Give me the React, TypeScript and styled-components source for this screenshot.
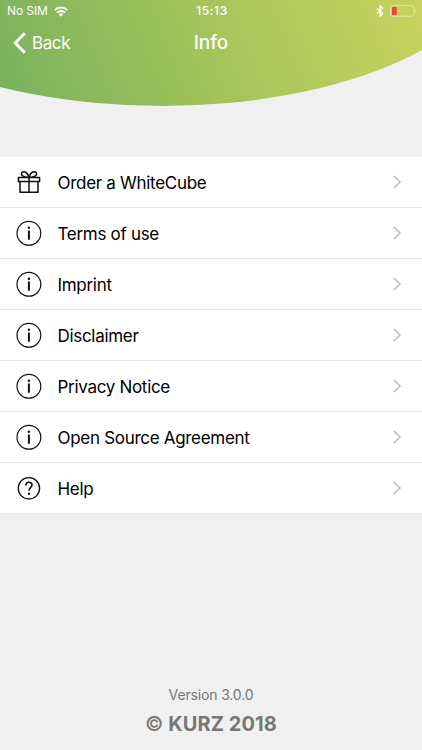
import React from "react";
import styled, { createGlobalStyle } from "styled-components";

const GlobalStyle = createGlobalStyle`
  * { box-sizing: border-box; }
  body { margin: 0; background: #f0f0f0; font-family: Inter, "Liberation Sans", sans-serif; }
`;

const Screen = styled.main`
  display: flex;
  flex-direction: column;
  width: 422px;
  height: 750px;
  overflow: hidden;
  background: #f0f0f0;
`;

const Header = styled.header`
  flex: none;
  height: 157px;
  color: #fff;
  background: linear-gradient(68deg, #7cb25e 8%, #98c05b 40%, #b1c95c 68%, #c6d25f 98%);
  clip-path: ellipse(336px 153px at 162px -47px);
`;

const StatusBar = styled.div`
  display: grid;
  grid-template-columns: 1fr auto 1fr;
  align-items: center;
  height: 22px;
  padding: 0 5px 0 7px;
`;

const StatusGroup = styled.div<{ $end?: boolean }>`
  display: flex;
  align-items: center;
  justify-content: ${(p) => (p.$end ? "flex-end" : "flex-start")};
  gap: 6px;
`;

const Carrier = styled.span`
  font-size: 12px;
  line-height: 22px;
  letter-spacing: -0.1px;
`;

const Clock = styled.span`
  font-size: 12px;
  font-weight: 500;
  line-height: 22px;
  letter-spacing: 0.6px;
`;

const NavBar = styled.nav`
  display: grid;
  grid-template-columns: 1fr auto 1fr;
  align-items: center;
  height: 42px;
  padding: 0 13px;
`;

const BackButton = styled.button`
  display: flex;
  align-items: center;
  gap: 6px;
  padding: 0;
  border: 0;
  background: none;
  color: inherit;
  font: 400 17px/22px Inter, sans-serif;
  letter-spacing: -0.4px;
`;

const Title = styled.h1`
  margin: 0;
  font-size: 19px;
  font-weight: 500;
  line-height: 24px;
  letter-spacing: -0.1px;
`;

const Menu = styled.ul`
  flex: none;
  display: grid;
  grid-template-rows: repeat(7, 51px);
  margin: 0;
  padding: 0;
  list-style: none;
  background: #fff;
`;

const MenuRow = styled.li`
  display: grid;
  grid-template-columns: 26px 1fr 10px;
  align-items: center;
  column-gap: 15.5px;
  padding: 0 20px 0 16px;
  border-bottom: 1px solid #e6e6e6;
  color: #000;
`;

const Label = styled.span`
  padding-top: 2px;
  font-size: 17px;
  line-height: 24px;
  letter-spacing: -0.3px;
  white-space: nowrap;
`;

const Footer = styled.footer`
  display: flex;
  flex-direction: column;
  align-items: center;
  gap: 7px;
  margin-top: auto;
  padding-bottom: 13px;
  color: #777;
`;

const Version = styled.span`
  font-size: 14px;
  line-height: 18px;
  letter-spacing: -0.15px;
`;

const Copyright = styled.span`
  font-size: 20px;
  font-weight: 700;
  line-height: 26px;
  letter-spacing: 0.08px;
`;

const CopyrightSign = styled.span`
  font-weight: 500;
`;

type IconKind = "gift" | "info" | "help";

const RowIcon = ({ kind }: { kind: IconKind }) => (
  <svg width="26" height="26" viewBox="0 0 26 26" fill="none" stroke="#111" strokeWidth="1.2">
    {kind === "gift" && (
      <g strokeWidth="1.5" strokeLinejoin="round">
        <path d="M2.400 8.600h21.200v4H2.400zM4 12.600h18v10.600H4zM13 8.600v14.600" />
        <path d="M13 8.600C10.500 8.400 5.700 7.400 5.400 5.200 5.100 3.100 7.600 2.200 9.300 3 11.300 3.900 12.500 6.500 13 8.600ZM13 8.600c2.500-.2 7.300-1.200 7.600-3.400.3-2.100-2.200-3-3.900-2.200C14.700 3.900 13.500 6.500 13 8.600Z" />
      </g>
    )}
    {kind === "info" && (
      <>
        <circle cx="12.900" cy="13.300" r="11.900" />
        <path d="M12.900 10.500v9.200" strokeWidth="2" />
        <circle cx="12.900" cy="7.700" r="1.200" fill="#111" stroke="none" />
      </>
    )}
    {kind === "help" && (
      <>
        <circle cx="12.900" cy="13.300" r="10.700" strokeWidth="1.300" />
        <path d="M9.900 10.500c0-1.900 1.200-3.200 3-3.200s3.100 1.100 3.100 2.800c0 2.400-3 2.500-3 5.200v.5" strokeWidth="1.600" />
        <circle cx="13" cy="18.700" r="1.200" fill="#111" stroke="none" />
      </>
    )}
  </svg>
);

const Chevron = () => (
  <svg width="10" height="14" viewBox="0 0 10 14" fill="none" stroke="#c2c2c4" strokeWidth="1.700">
    <path d="M1.800 .9 7.900 7l-6.100 6.100" />
  </svg>
);

const BackArrow = () => (
  <svg width="13" height="22" viewBox="0 0 13 22" fill="none" stroke="#fff" strokeWidth="2.900">
    <path d="M11.800 1.200 2.200 11l9.600 9.800" />
  </svg>
);

const WifiIcon = () => (
  <svg width="14" height="11" viewBox="0 0 14 11" fill="none" stroke="#fff" strokeWidth="1.900">
    <path d="M.7 4.100a9 9 0 0 1 12.600 0M3 6.600a5.700 5.700 0 0 1 8 0" />
    <path d="M4.700 8.300a3.300 3.300 0 0 1 4.600 0L7 10.700Z" fill="#fff" stroke="none" />
  </svg>
);

const BluetoothIcon = () => (
  <svg width="8" height="12" viewBox="0 0 8 12" fill="none" stroke="#fff" strokeWidth="1.200">
    <path d="m.8 3.200 6 5.500L4 11.200V.8l2.800 2.500-6 5.500" />
  </svg>
);

const BatteryIcon = () => (
  <svg width="27" height="12" viewBox="0 0 27 12" fill="none">
    <rect x=".6" y=".6" width="23.300" height="10.600" rx="2" stroke="#e7edbd" strokeOpacity=".75" />
    <rect x="2" y="2" width="4.700" height="7.900" rx=".7" fill="#f5412d" />
    <path d="M25 4v4c1.500-.6 1.500-3.400 0-4Z" fill="#e7edbd" fillOpacity=".75" />
  </svg>
);

const items: { label: string; icon: IconKind }[] = [
  { label: "Order a WhiteCube", icon: "gift" },
  { label: "Terms of use", icon: "info" },
  { label: "Imprint", icon: "info" },
  { label: "Disclaimer", icon: "info" },
  { label: "Privacy Notice", icon: "info" },
  { label: "Open Source Agreement", icon: "info" },
  { label: "Help", icon: "help" },
];

export default function App() {
  return (
    <>
      <GlobalStyle />
      <Screen>
        <Header>
          <StatusBar>
            <StatusGroup>
              <Carrier>No SIM</Carrier>
              <WifiIcon />
            </StatusGroup>
            <Clock>15:13</Clock>
            <StatusGroup $end>
              <BluetoothIcon />
              <BatteryIcon />
            </StatusGroup>
          </StatusBar>
          <NavBar>
            <BackButton>
              <BackArrow />
              Back
            </BackButton>
            <Title>Info</Title>
          </NavBar>
        </Header>
        <Menu>
          {items.map((item) => (
            <MenuRow key={item.label}>
              <RowIcon kind={item.icon} />
              <Label>{item.label}</Label>
              <Chevron />
            </MenuRow>
          ))}
        </Menu>
        <Footer>
          <Version>Version 3.0.0</Version>
          <Copyright><CopyrightSign>©</CopyrightSign> KURZ 2018</Copyright>
        </Footer>
      </Screen>
    </>
  );
}
